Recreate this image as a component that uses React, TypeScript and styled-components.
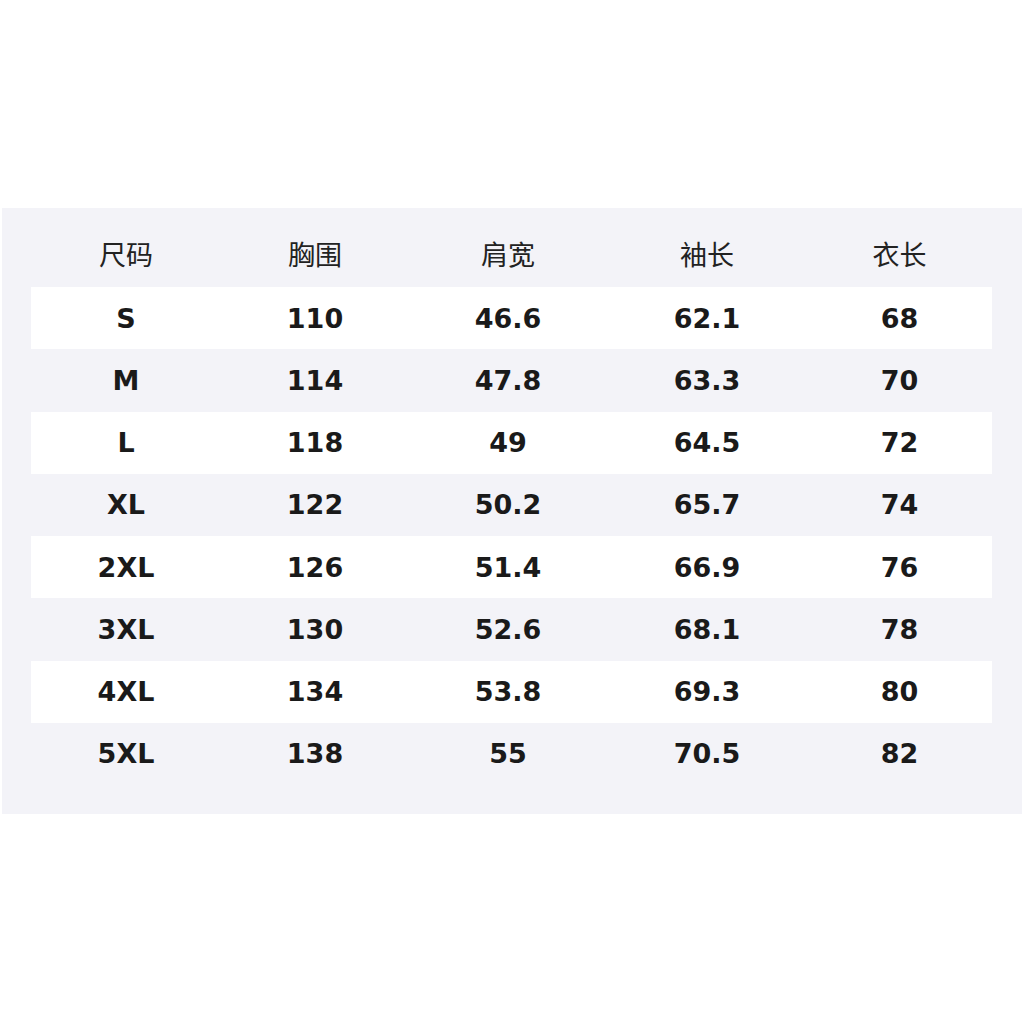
import React from 'react';
import styled, { createGlobalStyle } from 'styled-components';

const GlobalStyle = createGlobalStyle`
  html, body {
    margin: 0;
    padding: 0;
    background: #ffffff;
  }
  body {
    font-family: 'DejaVu Sans', 'Noto Sans CJK SC', sans-serif;
  }
`;

const headers = ['尺码', '胸围', '肩宽', '袖长', '衣长'];

const rows: string[][] = [
  ['S', '110', '46.6', '62.1', '68'],
  ['M', '114', '47.8', '63.3', '70'],
  ['L', '118', '49', '64.5', '72'],
  ['XL', '122', '50.2', '65.7', '74'],
  ['2XL', '126', '51.4', '66.9', '76'],
  ['3XL', '130', '52.6', '68.1', '78'],
  ['4XL', '134', '53.8', '69.3', '80'],
  ['5XL', '138', '55', '70.5', '82'],
];

export default function App(): JSX.Element {
  return (
    <>
      <GlobalStyle />
      <Page>
        <Panel>
          <HeaderRow>
            {headers.map((h) => (
              <HeadCell key={h}>{h}</HeadCell>
            ))}
          </HeaderRow>
          {rows.map((row, i) => (
            <DataRow key={row[0]} $striped={i % 2 === 0}>
              {row.map((v, j) => (
                <Cell key={j}>{v}</Cell>
              ))}
            </DataRow>
          ))}
        </Panel>
      </Page>
    </>
  );
}

const Page = styled.div`
  width: 1024px;
  height: 1024px;
  padding: 208px 2px 0 2px;
  box-sizing: border-box;
`;

const Panel = styled.div`
  width: 1020px;
  height: 606px;
  box-sizing: border-box;
  background: #f3f3f8;
  padding: 17px 30px 0 29px;
`;

const columns = '190px 188px 198px 200px 185px';

const HeaderRow = styled.div`
  display: grid;
  grid-template-columns: ${columns};
  height: 62px;
  align-items: center;
`;

const HeadCell = styled.div`
  text-align: center;
  font-family: 'Noto Sans CJK SC', 'DejaVu Sans', sans-serif;
  font-size: 27px;
  color: #222222;
  line-height: 1;
  padding-bottom: 6px;
`;

const DataRow = styled.div<{ $striped: boolean }>`
  display: grid;
  grid-template-columns: ${columns};
  height: 62.25px;
  align-items: center;
  background: ${(p) => (p.$striped ? '#ffffff' : 'transparent')};
`;

const Cell = styled.div`
  text-align: center;
  font-family: 'DejaVu Sans', sans-serif;
  font-weight: bold;
  font-size: 27px;
  color: #1a1a1a;
  line-height: 1;
`;
